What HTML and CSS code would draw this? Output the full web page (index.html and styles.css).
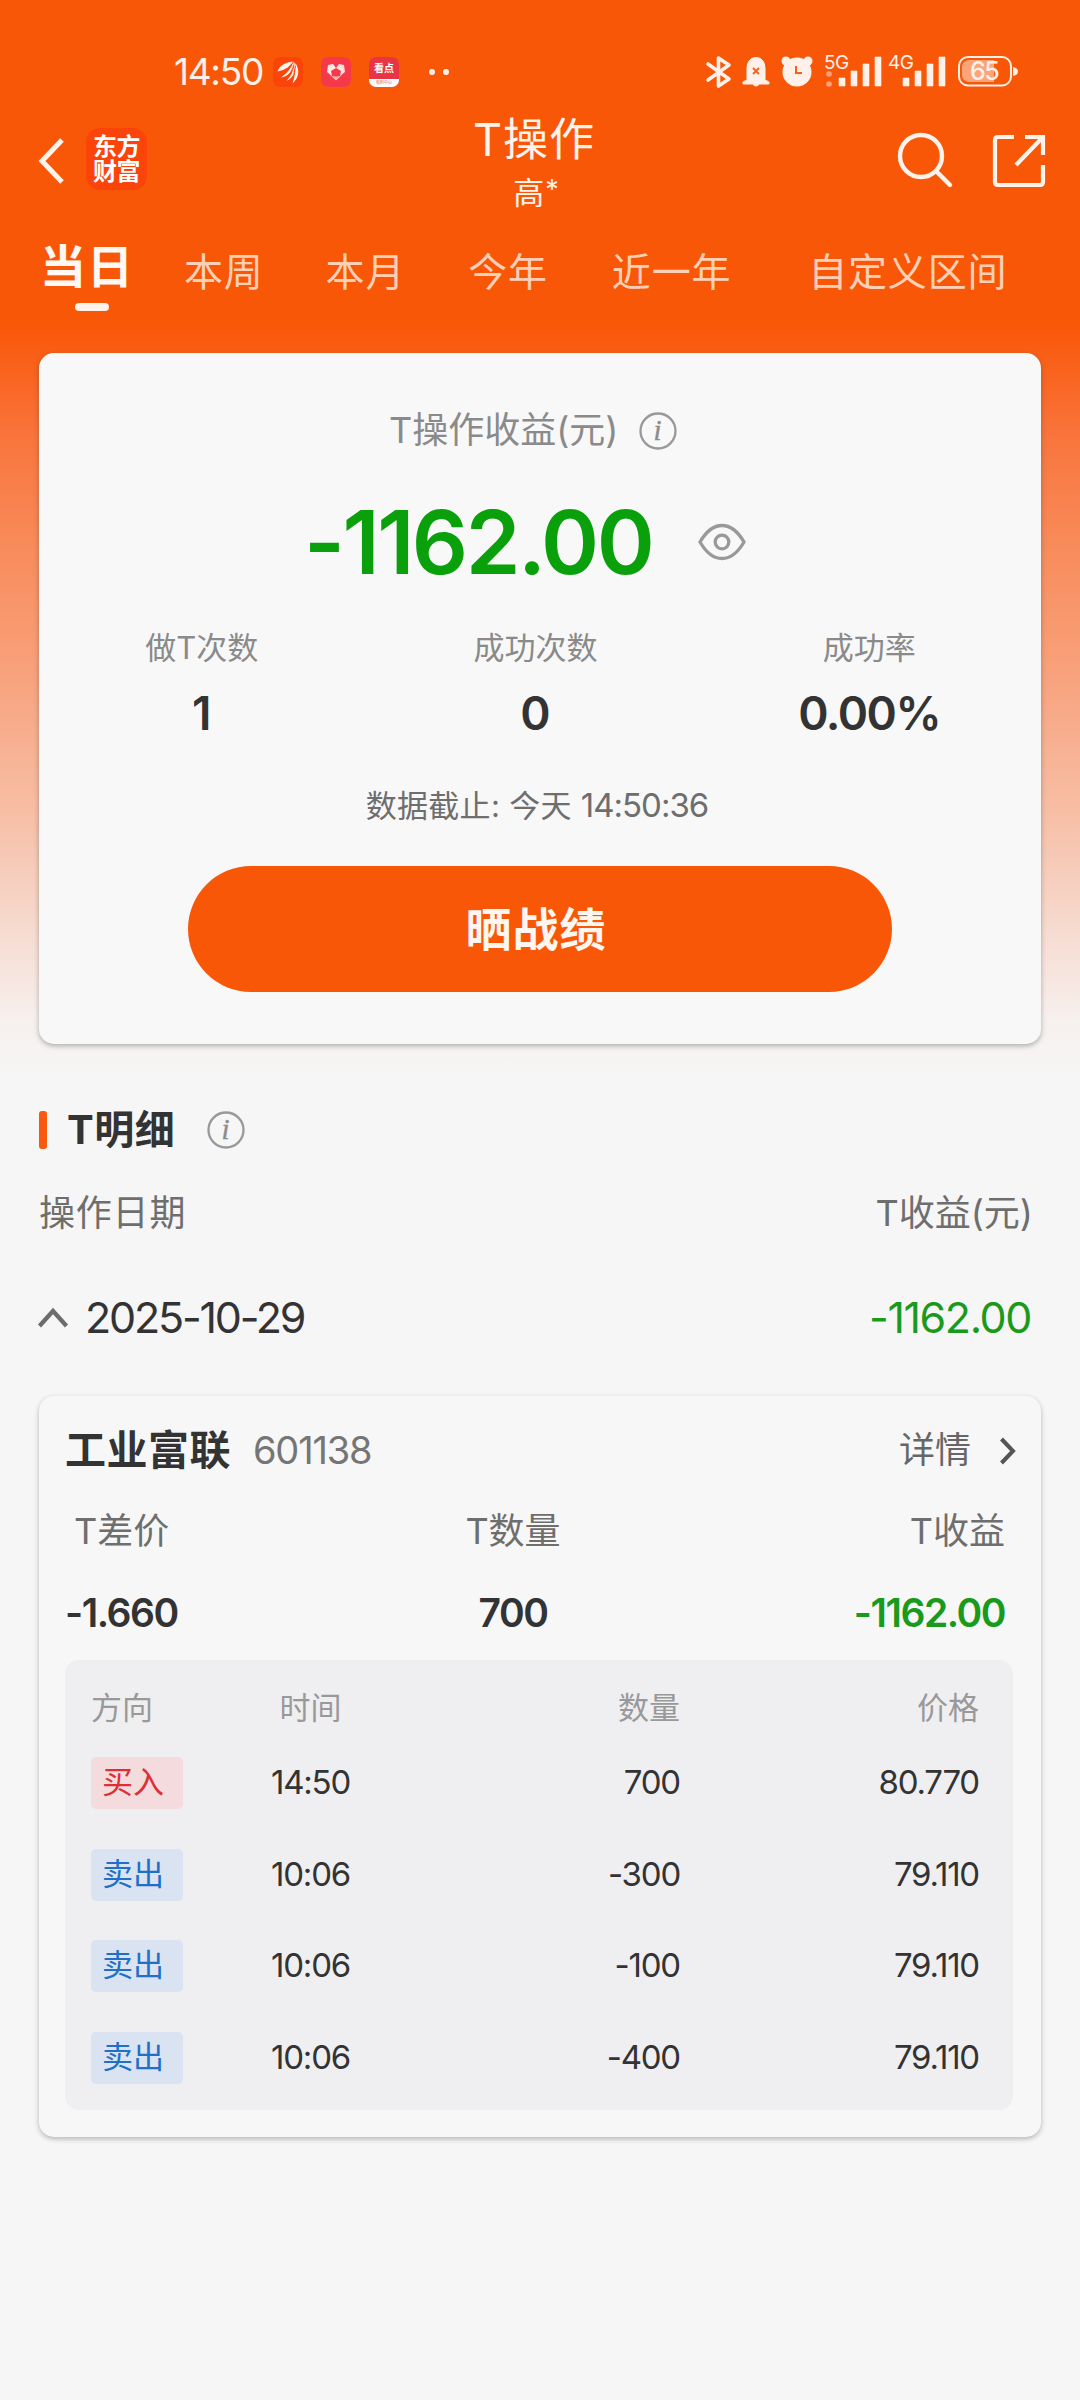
FILE: index.html
```html
<!DOCTYPE html>
<html lang="zh-CN">
<head>
<meta charset="utf-8">
<title>T操作</title>
<link rel="stylesheet" href="styles.css">
</head>
<body>
<div class="status">
  <span class="clock">14:50</span>
  <div class="apps">
    <svg class="app" viewBox="0 0 30 30"><rect width="30" height="30" rx="7" fill="#fb4409"/><g fill="#fff3ec"><path d="M4.500 14.500C7 8 12 5.500 20 4.500C17 9 13 13 4.500 14.500Z"/><path d="M8 20.500C13 17 18 12 20.500 4.500C22 12 17 19 8 20.500Z"/><path d="M13.500 24C18 19 21 13 21.500 5C24.500 12 21 21 13.500 24Z"/><path d="M19.500 26.500C21.500 20 23 14 22.500 6C27 13 26 21 19.500 26.500Z"/></g><path d="M7.500 16.500Q16 12 19 7M11.500 21.500Q19 16 20.800 8M17.500 25Q22 18 22.300 9" fill="none" stroke="#fb4409" stroke-width="1"/></svg>
    <svg class="app" viewBox="0 0 30 30"><rect width="30" height="30" rx="7" fill="#f5394a"/><path d="M7 8L12 7L15 11L10 14L11 19L6 15Z" fill="#ffe9e6"/><path d="M23 8L18 7L15 11L20 14L19 19L24 15Z" fill="#ffe0dc"/><path d="M8 17L11 19L15 19.500L19 19L22 17L15 23.500Z" fill="#ffb5b5"/></svg>
    <div class="app kandian"><b>看点</b><i>有料中心</i></div>
  </div>
  <div class="dots"><i></i><i></i></div>
  <svg class="sysicons" viewBox="0 0 320 40" fill="#fff1e9">
    <path d="M8 12L29 27L18.500 34V6L29 13L8 28" fill="none" stroke="#fff1e9" stroke-width="3.600" stroke-linejoin="round" stroke-linecap="round"/>
    <path d="M47 28V17C47 9 51 5.500 56 5.500S65 9 65 17V28L69 30V32H59.500Q56 36 52.500 32H43V30Z" stroke="#fff1e9" stroke-linejoin="round"/>
    <path d="M53 16L59 22M59 16L53 22" stroke="#f4611c" stroke-width="1.800"/>
    <circle cx="86" cy="9" r="4.500"/><circle cx="108" cy="9" r="4.500"/><circle cx="97" cy="20" r="14.500"/>
    <path d="M96 14V21H102" fill="none" stroke="#f4611c" stroke-width="2"/>
    <text x="124" y="17" class="net">5G</text><text x="188" y="17" class="net">4G</text>
    <g opacity=".5"><circle cx="129" cy="22" r="2.800"/><circle cx="129" cy="32" r="2.800"/></g>
    <path d="M139 26h6v8h-6zM151 19h6v15h-6zM163 12h6v22h-6zM175 5h6v29h-6zM203 26h6v8h-6zM215 19h6v15h-6zM227 12h6v22h-6zM239 5h6v29h-6z" stroke="#fff1e9" stroke-width=".6" stroke-linejoin="round"/>
    <rect x="259" y="5" width="52" height="28.500" rx="9" fill="none" stroke="#fff1e9" stroke-width="2"/>
    <path d="M270 8H294V30H270Q262 30 262 22V16Q262 8 270 8Z" opacity=".5"/>
    <path d="M313 15Q318 16 318 19.500T313 24Z"/>
    <text x="270" y="28" class="pct">65</text>
  </svg>
</div>

<header class="nav">
  <svg class="back" viewBox="0 0 26 48"><path d="M23 3L3 24L23 45" fill="none" stroke="#fff3ec" stroke-width="5"/></svg>
  <div class="logo"><span>东方</span><span>财富</span></div>
  <div class="title"><h1>T操作</h1><p>高<sup>*</sup></p></div>
  <svg class="search" viewBox="0 0 56 56" fill="none" stroke="#fff3ec" stroke-width="4.400"><circle cx="24" cy="24" r="21"/><path d="M39 39L53 53" stroke-linecap="round"/></svg>
  <svg class="share" viewBox="0 0 54 54" fill="none" stroke="#fff3ec" stroke-width="4.200"><path d="M22 3H6Q3 3 3 6V48Q3 51 6 51H48Q51 51 51 48V31"/><path d="M33 3H51V21M51 3L24 31"/></svg>
</header>

<nav class="tabs">
  <a class="tab on">当日</a><a class="tab t2">本周</a><a class="tab t3">本月</a><a class="tab t4">今年</a><a class="tab t5">近一年</a><a class="tab t6">自定义区间</a>
</nav>

<section class="card summary">
  <div class="caption"><span>T操作收益(元)</span><svg class="info" viewBox="0 0 38 38"><circle cx="19" cy="19" r="17.500"/><text x="18.500" y="28">i</text></svg></div>
  <div class="amount"><strong>-1162.00</strong><svg class="eye" viewBox="0 0 50 40"><path d="M3 20C10 8 17 3.500 25 3.500S40 8 47 20C40 32 33 36.500 25 36.500S10 32 3 20Z"/><circle cx="25" cy="20" r="6.800"/></svg></div>
  <div class="stats">
    <div><span>做T次数</span><b>1</b></div>
    <div><span>成功次数</span><b>0</b></div>
    <div><span>成功率</span><b class="pc">0.00%</b></div>
  </div>
  <p class="asof">数据截止: 今天 <span>14:50:36</span></p>
  <button class="cta">晒战绩</button>
</section>

<div class="section-head"><i class="mark"></i><h2>T明细</h2><svg class="info" viewBox="0 0 38 38"><circle cx="19" cy="19" r="17.500"/><text x="18.500" y="28">i</text></svg></div>
<div class="row cols"><span class="wide">操作日期</span><span>T收益(元)</span></div>
<div class="row day"><svg class="up" viewBox="0 0 32 22"><path d="M2.500 19L16 4L29.500 19" fill="none" stroke="#6c6c6c" stroke-width="4.200"/></svg><span class="date">2025-10-29</span><span class="loss">-1162.00</span></div>

<section class="card detail">
  <div class="stock"><h3>工业富联</h3><span class="code">601138</span><span class="more">详情</span><svg class="right" viewBox="0 0 18 30"><path d="M2.500 3L14 15L2.500 27" fill="none" stroke="#555" stroke-width="4"/></svg></div>
  <div class="trio labels"><span>T差价</span><span>T数量</span><span>T收益</span></div>
  <div class="trio values"><b>-1.660</b><b>700</b><b class="loss">-1162.00</b></div>
  <div class="trades">
    <div class="trade head"><span>方向</span><span>时间</span><span>数量</span><span>价格</span></div>
    <div class="trade"><span class="tag buy">买入</span><span>14:50</span><span>700</span><span>80.770</span></div>
    <div class="trade"><span class="tag sell">卖出</span><span>10:06</span><span>-300</span><span class="p79">79.110</span></div>
    <div class="trade"><span class="tag sell">卖出</span><span>10:06</span><span>-100</span><span class="p79">79.110</span></div>
    <div class="trade"><span class="tag sell">卖出</span><span>10:06</span><span>-400</span><span class="p79">79.110</span></div>
  </div>
</section>
</body>
</html>
```
FILE: styles.css
```css
* { box-sizing: border-box; }
body {
  margin: 0;
  width: 1080px;
  height: 2400px;
  overflow: hidden;
  font-family: Inter, "Noto Sans CJK SC", sans-serif;
  font-weight: 400;
  line-height: 1.2;
  color: #333;
  background: linear-gradient(#f95708 0, #f95708 325px, #f9733a 430px, #f88a59 540px, #f8a37e 680px, #f7c0a8 820px, #f6dbd0 930px, #f6f0ee 1020px, #f6f6f6 1080px);
  background-color: #f6f6f6;
}
h1, h2, h3, p { margin: 0; font-weight: 400; }
svg { display: block; flex: none; overflow: visible; }
i { font-style: normal; }

.status { display: flex; align-items: center; height: 40px; margin-top: 52px; padding-left: 174px; color: #fff1e9; }
.clock { width: 99px; font-size: 37px; line-height: 40px; letter-spacing: -1.300px; }
.apps { display: flex; gap: 18px; }
.app { width: 30px; height: 30px; }
.kandian { display: flex; flex-direction: column; border-radius: 7px; overflow: hidden; background: #e83545; text-align: center; color: #fff; }
.kandian b { font-size: 10px; line-height: 22px; }
.kandian i { flex: 1; background: #fff; color: #e84a50; font-size: 4px; line-height: 8px; }
.dots { display: flex; gap: 8px; margin-left: 30px; }
.dots i { width: 6px; height: 6px; border-radius: 50%; background: #fff1e9; }
.sysicons { width: 320px; height: 40px; margin-left: 251px; }
.net { font-size: 19px; letter-spacing: -.5px; }
.pct { font-size: 25px; font-weight: 500; letter-spacing: -1.500px; }

.nav { display: flex; align-items: flex-start; height: 120px; margin-top: 18px; padding-left: 39px; color: #fff3ec; }
.back { width: 26px; height: 48px; margin-top: 27px; }
.logo { display: flex; flex-direction: column; width: 61px; height: 62px; margin: 18px 0 0 21px; padding-top: 6px; border-radius: 14px; background: #fb4409; color: #fff; font-size: 24px; font-weight: 700; line-height: 25px; text-align: center; letter-spacing: -.5px; }
.title { width: 200px; margin-left: 287px; text-align: center; }
.title h1 { font-size: 45px; line-height: 59px; letter-spacing: 1px; }
.title p { padding-left: 4px; font-size: 31px; line-height: 48px; }
.title sup { font-size: 27px; line-height: 0; vertical-align: 5px; margin-left: 1px; }
.search { width: 56px; height: 56px; margin: 22px 0 0 263px; }
.share { width: 54px; height: 54px; margin: 24px 0 0 39px; }

.tabs { display: flex; height: 123px; padding-left: 40px; color: #ffcfb6; }
.tab { padding-top: 12px; font-size: 39px; line-height: 60px; letter-spacing: .8px; white-space: nowrap; }
.tab.on { width: 104px; padding-top: 6px; font-size: 46px; font-weight: 700; color: #fff8f3; letter-spacing: 1px; }
.tab.on::after { content: ""; display: block; width: 34px; height: 8px; margin: 7px 0 0 35px; border-radius: 4px; background: #fff3ec; }
.t2 { margin-left: 40px; }
.t3 { margin-left: 62px; }
.t4 { margin-left: 63px; }
.t5 { margin-left: 64px; }
.t6 { margin-left: 77px; }

.card { margin: 0 39px; border-radius: 15px; background: #f8f8f8; box-shadow: 0 2px 5px rgba(60, 70, 70, .4); }
.summary { height: 691px; padding-top: 48px; }
.caption { display: flex; align-items: center; height: 60px; padding-left: 350px; font-size: 36px; color: #8a8a8a; }
.caption .info { margin-left: 20px; }
.info { width: 38px; height: 38px; fill: none; stroke: #999; stroke-width: 2.300px; }
.info text { fill: #8c8c8c; stroke: #8c8c8c; stroke-width: .4px; font: italic 29px "Liberation Serif", serif; text-anchor: middle; }
.amount { display: flex; align-items: center; height: 100px; margin-top: 31px; padding-left: 265px; color: #09a00c; }
.amount strong { width: 347px; font-size: 88px; font-weight: 600; line-height: 100px; letter-spacing: -2.500px; }
.eye { width: 50px; height: 40px; margin-left: 46px; fill: none; stroke: #999; stroke-width: 3.300px; }
.stats { display: grid; grid-template-columns: repeat(3, 1fr); margin: 31px 5px 0 -4px; text-align: center; }
.stats span { display: block; font-size: 31px; line-height: 50px; color: #8a8a8a; }
.stats b { display: block; font-size: 46px; font-weight: 600; line-height: 80px; }
.stats .pc { letter-spacing: -1.500px; }
.asof { margin-top: 27px; padding-right: 6px; text-align: center; font-size: 31px; line-height: 50px; color: #6e6e6e; white-space: nowrap; letter-spacing: .3px; }
.asof span { font-size: 33px; letter-spacing: -1px; }
.cta { display: block; width: 704px; height: 126px; margin: 35px 0 0 149px; padding: 0 8px 0 0; border: 0; border-radius: 63px; background: #f95708; color: #fff6f0; font: 600 46px/126px Inter, "Noto Sans CJK SC", sans-serif; letter-spacing: 1px; }

.section-head { display: flex; align-items: center; height: 60px; margin-top: 56px; padding-left: 39px; }
.mark { width: 8px; height: 38px; border-radius: 3px; background: #f8590c; }
.section-head h2 { width: 140px; margin-left: 20px; font-size: 40px; font-weight: 700; letter-spacing: .5px; }
.row { display: flex; align-items: center; height: 60px; padding: 0 49px 0 39px; }
.cols { justify-content: space-between; margin-top: 24px; padding-right: 47px; font-size: 36px; color: #6e6e6e; }
.wide { letter-spacing: .8px; }
.day { height: 80px; margin-top: 34px; padding-left: 37px; font-size: 43px; }
.up { width: 32px; height: 22px; }
.date { margin-left: 16px; letter-spacing: -2.200px; }
.loss { color: #1a9a1c; }
.day .loss { margin-left: auto; letter-spacing: -1.400px; }

.detail { height: 741px; margin-top: 38px; padding: 25px 28px 0 26px; background: #f7f7f7; box-shadow: 0 2px 5px rgba(60, 60, 60, .35); }
.stock { display: flex; align-items: center; height: 60px; margin-right: -4px; }
.stock h3 { width: 188px; font-size: 41px; font-weight: 700; letter-spacing: .5px; }
.code { font-size: 38px; letter-spacing: -1.200px; color: #757575; }
.more { margin-left: auto; font-size: 36px; color: #666; }
.right { width: 18px; height: 30px; margin-left: 28px; }
.trio { display: grid; grid-template-columns: 348px 200px 1fr; padding: 0 8px 0 0; }
.trio > :nth-child(2) { text-align: center; }
.trio > :nth-child(3) { text-align: right; }
.labels { margin-top: 20px; font-size: 36px; line-height: 60px; color: #6e6e6e; }
.labels > :first-child { padding-left: 9px; }
.values { margin-top: 22px; font-size: 39px; line-height: 60px; }
.values b { font-weight: 600; letter-spacing: -1.500px; }
.trades { height: 450px; margin-top: 17px; padding: 19px 34px 0 26px; border-radius: 14px; background: #efeff1; }
.trade { display: grid; grid-template-columns: 92px 195px 302px 1fr; align-items: center; height: 91.700px; font-size: 33px; letter-spacing: -1.200px; }
.trade.head { height: 58px; font-size: 31px; letter-spacing: 0; color: #999; }
.trade > :nth-child(2) { padding-left: 60px; text-align: center; }
.trade > :nth-child(n+3) { text-align: right; }
.tag { width: 92px; height: 52px; padding-left: 11px; border-radius: 5px; font-size: 31px; line-height: 50px; letter-spacing: 0; }
.buy { background: #f4dcde; color: #dd3035; }
.sell { background: #d9e3f1; color: #2170c8; }
```
